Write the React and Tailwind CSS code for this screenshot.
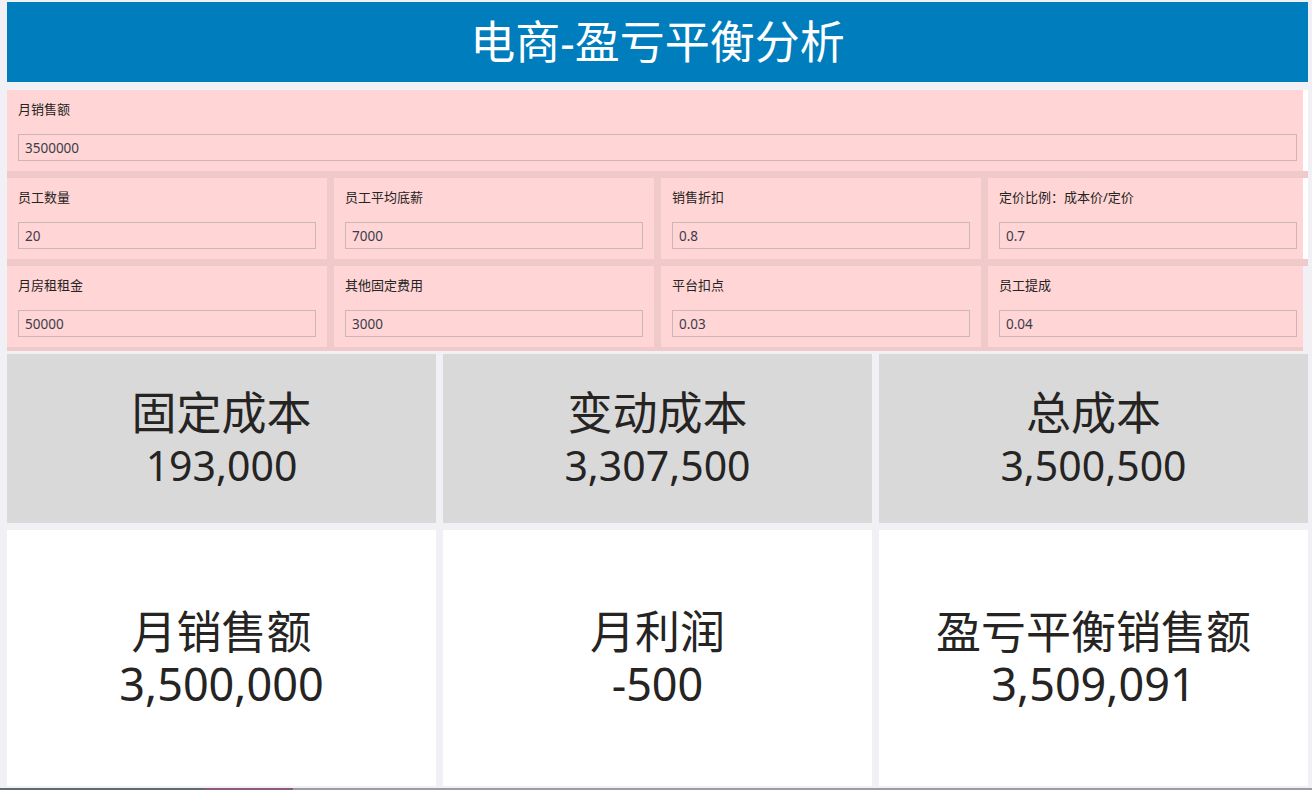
const font = { fontFamily: '"Noto Sans", "Noto Sans CJK SC", sans-serif' };

function Field({ label, value, className = "" }) {
  return (
    <div className={`h-[81px] bg-[#ffd5d5] pt-[10px] ${className}`}>
      <div className="h-[18px] text-[13px] leading-[18px] text-[#252423]">{label}</div>
      <input
        readOnly
        value={value}
        className="mt-[16px] block h-[27px] w-full border border-[#cbb6b7] bg-transparent pl-[6px] text-[13.5px] text-[#3c3c4c] outline-none"
        style={font}
      />
    </div>
  );
}

function Strip({ partial = false }) {
  return <div className={partial ? "h-[4px] w-[1296px] bg-[#f0c9ca]" : "h-[7px] w-full bg-[#f0c9ca]"} />;
}

function StatCard({ label, value, tone }) {
  const gray = tone === "gray";
  return (
    <div
      className={`flex flex-1 flex-col items-center justify-center text-[#252423] ${
        gray ? "h-[169px] bg-[#d9d9d9]" : "h-[256px] bg-white"
      }`}
    >
      <div className="h-[52px] text-[45px] leading-[52px]">{label}</div>
      <div className={`h-[52px] leading-[52px] ${gray ? "text-[41px]" : "text-[45px]"}`}>{value}</div>
    </div>
  );
}

export default function App() {
  const rowA = [
    ["员工数量", "20"],
    ["员工平均底薪", "7000"],
    ["销售折扣", "0.8"],
    ["定价比例：成本价/定价", "0.7"],
  ];
  const rowB = [
    ["月房租租金", "50000"],
    ["其他固定费用", "3000"],
    ["平台扣点", "0.03"],
    ["员工提成", "0.04"],
  ];

  const renderRow = (items, edge) => (
    <div className="flex">
      <div className="flex w-[1296px] gap-[7px] bg-[#f0c9ca]">
        {items.map(([l, v], i) => (
          <Field
            key={l}
            label={l}
            value={v}
            className={i === 3 ? "w-[315px] pl-[11px] pr-[6px]" : "w-[320px] px-[11px]"}
          />
        ))}
      </div>
      <div className={`w-[5px] ${edge}`} />
    </div>
  );

  return (
    <div className="h-[790px] w-[1312px] overflow-hidden bg-[#f0f0f5] pl-[7px] pr-[4px] pt-[2px]" style={font}>
      <header className="flex h-[80px] items-center justify-center bg-[#007dbd] text-[45px] text-white">
        电商-盈亏平衡分析
      </header>

      <section className="mt-[8px]">
        <div className="flex">
          <Field label="月销售额" value="3500000" className="w-[1296px] pl-[11px] pr-[6px]" />
          <div className="w-[5px] bg-white" />
        </div>
        <Strip />
        {renderRow(rowA, "bg-white")}
        <Strip />
        {renderRow(rowB, "bg-transparent")}
        <Strip partial />
      </section>

      <div className="mt-[3px] flex gap-[7px]">
        <StatCard label="固定成本" value="193,000" tone="gray" />
        <StatCard label="变动成本" value="3,307,500" tone="gray" />
        <StatCard label="总成本" value="3,500,500" tone="gray" />
      </div>

      <div className="mt-[7px] flex gap-[7px]">
        <StatCard label="月销售额" value="3,500,000" />
        <StatCard label="月利润" value="-500" />
        <StatCard label="盈亏平衡销售额" value="3,509,091" />
      </div>

      <div className="-ml-[7px] mt-[2px] flex h-[2px] w-[1312px]">
        <div className="w-[205px] bg-[#5f6b6e]" />
        <div className="w-[88px] bg-[#8a5a78]" />
        <div className="flex-1 bg-[#9a9ea2]" />
      </div>
    </div>
  );
}
